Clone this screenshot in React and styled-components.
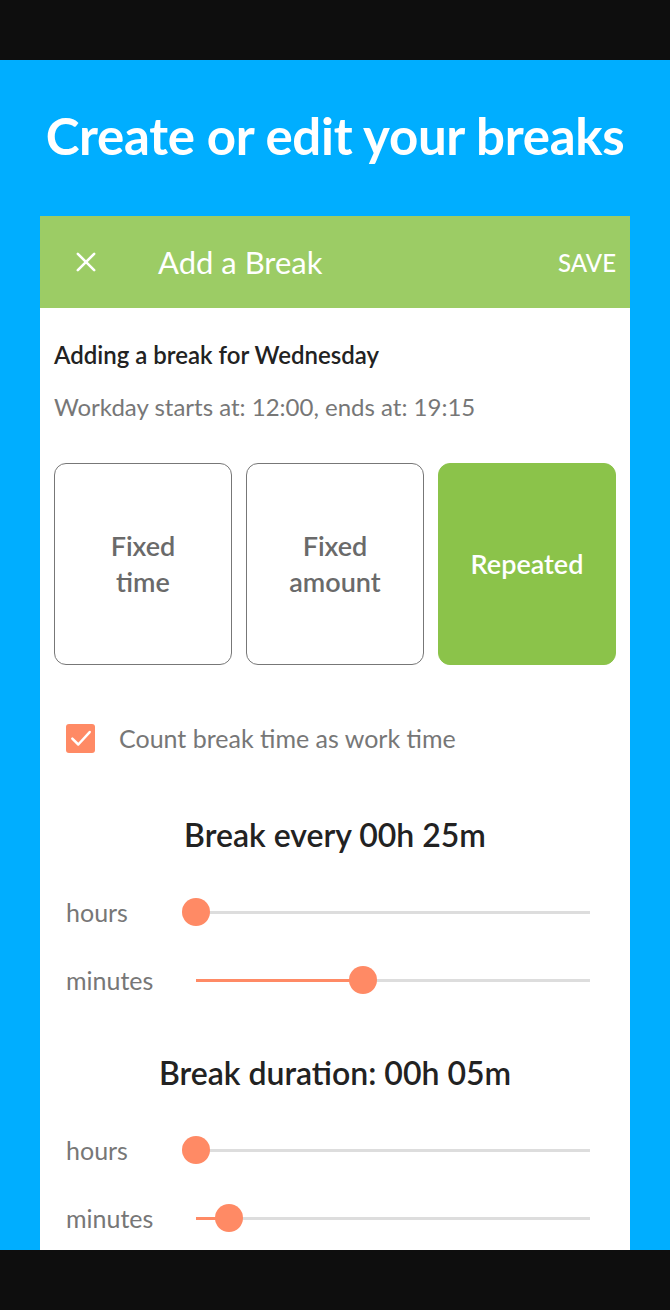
import styled, { createGlobalStyle } from "styled-components";

const GlobalStyle = createGlobalStyle`
  html, body {
    margin: 0;
    padding: 0;
    background: #0e0e0e;
  }
  * {
    box-sizing: border-box;
  }
`;

// slider data: value is 0..1 of the track
const everySliders = [
  { label: "hours", value: 0 },
  { label: "minutes", value: 0.425 },
];
const durationSliders = [
  { label: "hours", value: 0 },
  { label: "minutes", value: 0.084 },
];

const modes = [
  { key: "fixedTime", text: ["Fixed", "time"] },
  { key: "fixedAmount", text: ["Fixed", "amount"] },
  { key: "repeated", text: ["Repeated"], active: true },
];

export default function App() {
  return (
    <>
      <GlobalStyle />
      <Screen>
        <StatusBar />
        <Stage>
          <Headline>Create or edit your breaks</Headline>
          <Card>
            <Toolbar>
              <CloseIcon viewBox="0 0 24 24">
                <path d="M5 5 L19 19 M19 5 L5 19" />
              </CloseIcon>
              <ToolbarTitle>Add a Break</ToolbarTitle>
              <SaveButton>SAVE</SaveButton>
            </Toolbar>
            <Body>
              <Heading>Adding a break for Wednesday</Heading>
              <Subtle>Workday starts at: 12:00, ends at: 19:15</Subtle>
              <ModeRow>
                {modes.map((m) => (
                  <ModeButton key={m.key} $active={m.active}>
                    {m.text.map((t) => (
                      <span key={t}>{t}</span>
                    ))}
                  </ModeButton>
                ))}
              </ModeRow>
              <CheckRow>
                <Checkbox>
                  <svg viewBox="0 0 24 24" width="26" height="26">
                    <path
                      d="M4 12.5 L9.5 18 L20 6.5"
                      fill="none"
                      stroke="#fff"
                      strokeWidth="2.3"
                      strokeLinecap="round"
                      strokeLinejoin="round"
                    />
                  </svg>
                </Checkbox>
                <CheckLabel>Count break time as work time</CheckLabel>
              </CheckRow>
              <SectionTitle>Break every 00h 25m</SectionTitle>
              <SliderGroup>
                {everySliders.map((s) => (
                  <Slider key={s.label} {...s} />
                ))}
              </SliderGroup>
              <SectionTitle $second>Break duration: 00h 05m</SectionTitle>
              <SliderGroup>
                {durationSliders.map((s) => (
                  <Slider key={s.label} {...s} />
                ))}
              </SliderGroup>
            </Body>
          </Card>
        </Stage>
        <NavBar />
      </Screen>
    </>
  );
}

function Slider({ label, value }) {
  return (
    <SliderRow>
      <SliderLabel>{label}</SliderLabel>
      <Track>
        <Fill style={{ width: `${value * 100}%` }} />
        <Thumb style={{ left: `${value * 100}%` }} />
      </Track>
    </SliderRow>
  );
}

/* 
--------------------------------
Styled components
--------------------------------
*/

const Screen = styled.div`
  width: 670px;
  height: 1310px;
  display: flex;
  flex-direction: column;
  font-family: Lato, "Open Sans", sans-serif;
  overflow: hidden;
`;

const StatusBar = styled.div`
  height: 60px;
  flex-shrink: 0;
  background: #0e0e0e;
`;

const NavBar = styled.div`
  height: 60px;
  flex-shrink: 0;
  background: #0e0e0e;
`;

const Stage = styled.div`
  flex: 1;
  min-height: 0;
  background: #00aeff;
  overflow: hidden;
  display: flex;
  flex-direction: column;
  align-items: center;
`;

const Headline = styled.h1`
  margin: 0;
  height: 156px;
  padding-bottom: 6px;
  flex-shrink: 0;
  display: flex;
  align-items: center;
  justify-content: center;
  color: #fff;
  font-size: 51px;
  font-weight: 700;
  letter-spacing: -0.3px;
`;

const Card = styled.div`
  width: 590px;
  flex-shrink: 0;
  background: #fff;
`;

const Toolbar = styled.div`
  height: 92px;
  background: #9ccc65;
  display: flex;
  align-items: center;
  padding: 0 14px 0 32px;
  color: #fff;
`;

const CloseIcon = styled.svg`
  width: 28px;
  height: 28px;
  fill: none;
  stroke: #fff;
  stroke-width: 2.2;
  stroke-linecap: round;
`;

const ToolbarTitle = styled.div`
  flex: 1;
  margin-left: 58px;
  font-size: 31px;
  font-weight: 400;
`;

const SaveButton = styled.div`
  font-size: 24px;
  font-weight: 500;
`;

const Body = styled.div`
  padding: 32px 14px 40px;
`;

const Heading = styled.div`
  font-size: 24px;
  font-weight: 600;
  color: #222;
  line-height: 30px;
`;

const Subtle = styled.div`
  margin-top: 22px;
  font-size: 24px;
  color: #777;
  line-height: 30px;
`;

const ModeRow = styled.div`
  margin-top: 41px;
  display: grid;
  grid-template-columns: repeat(3, 1fr);
  gap: 14px;
`;

const ModeButton = styled.div`
  height: 202px;
  border-radius: 12px;
  border: 1.5px solid ${(p) => (p.$active ? "#8bc34a" : "#777")};
  background: ${(p) => (p.$active ? "#8bc34a" : "#fff")};
  color: ${(p) => (p.$active ? "#fff" : "#6a6a6a")};
  display: flex;
  flex-direction: column;
  align-items: center;
  justify-content: center;
  font-size: 27px;
  font-weight: 600;
  line-height: 36px;
`;

const CheckRow = styled.div`
  margin-top: 58px;
  display: flex;
  align-items: center;
  padding-left: 12px;
`;

const Checkbox = styled.div`
  width: 29px;
  height: 29px;
  border-radius: 3px;
  background: #ff8a65;
  display: flex;
  align-items: center;
  justify-content: center;
`;

const CheckLabel = styled.div`
  margin-left: 24px;
  font-size: 25px;
  color: #777;
`;

const SectionTitle = styled.div`
  margin-top: ${(p) => (p.$second ? "57px" : "62px")};
  text-align: center;
  font-size: 32px;
  font-weight: 600;
  color: #222;
  line-height: 40px;
`;

const SliderGroup = styled.div`
  margin-top: 41px;
  display: flex;
  flex-direction: column;
  gap: 36px;
`;

const SliderRow = styled.div`
  height: 32px;
  display: flex;
  align-items: center;
  padding-left: 12px;
  padding-right: 26px;
`;

const SliderLabel = styled.div`
  width: 130px;
  font-size: 25px;
  color: #777;
`;

const Track = styled.div`
  position: relative;
  flex: 1;
  height: 3px;
  background: #dddddd;
`;

const Fill = styled.div`
  position: absolute;
  left: 0;
  top: 0;
  bottom: 0;
  background: #ff8a65;
`;

const Thumb = styled.div`
  position: absolute;
  top: 50%;
  width: 28px;
  height: 28px;
  border-radius: 50%;
  background: #ff8a65;
  transform: translate(-50%, -50%);
`;
